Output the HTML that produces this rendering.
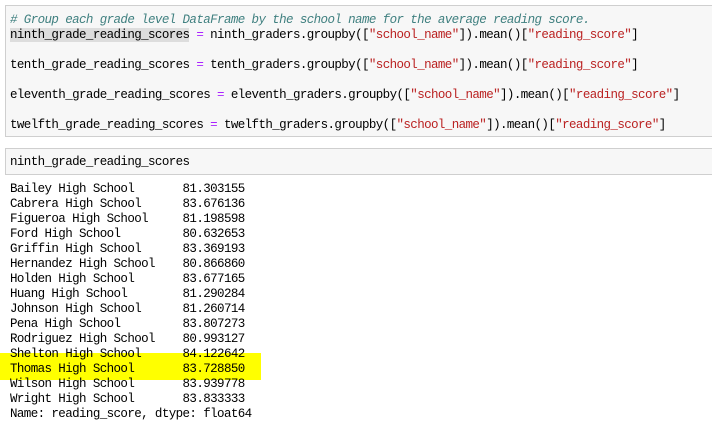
<html><head><style>
body{margin:0;width:712px;height:427px;background:#fff;position:relative;overflow:hidden;font-family:"Liberation Mono",monospace;font-size:12.5px;letter-spacing:-0.6px;color:#000}
.box{position:absolute;left:5px;right:-2px;background:#f7f7f7;border:1px solid #cfcfcf}
.l{position:absolute;left:10px;white-space:pre;line-height:15px}
.c{color:#408080;font-style:italic}.s{color:#BA2121}.o{color:#AA22FF}
.hl{background:#ddd}
</style></head><body>
<div class="box" style="top:5px;height:130px"></div>
<div class="box" style="top:148px;height:25px"></div>
<div style="position:absolute;left:0;top:353px;width:261px;height:27px;background:#ffff00"></div>
<div class="l c" style="top:13px"># Group each grade level DataFrame by the school name for the average reading score.</div>
<div class="l" style="top:28px"><span class="hl">ninth_grade_reading_scores</span> <span class="o">=</span> ninth_graders.groupby([<span class="s">"school_name"</span>]).mean()[<span class="s">"reading_score"</span>]</div>
<div class="l" style="top:58px">tenth_grade_reading_scores <span class="o">=</span> tenth_graders.groupby([<span class="s">"school_name"</span>]).mean()[<span class="s">"reading_score"</span>]</div>
<div class="l" style="top:88px">eleventh_grade_reading_scores <span class="o">=</span> eleventh_graders.groupby([<span class="s">"school_name"</span>]).mean()[<span class="s">"reading_score"</span>]</div>
<div class="l" style="top:118px">twelfth_grade_reading_scores <span class="o">=</span> twelfth_graders.groupby([<span class="s">"school_name"</span>]).mean()[<span class="s">"reading_score"</span>]</div>
<div class="l" style="top:155px">ninth_grade_reading_scores</div>
<div class="l" style="top:182px">Bailey High School       81.303155
Cabrera High School      83.676136
Figueroa High School     81.198598
Ford High School         80.632653
Griffin High School      83.369193
Hernandez High School    80.866860
Holden High School       83.677165
Huang High School        81.290284
Johnson High School      81.260714
Pena High School         83.807273
Rodriguez High School    80.993127
Shelton High School      84.122642
Thomas High School       83.728850
Wilson High School       83.939778
Wright High School       83.833333
Name: reading_score, dtype: float64</div>
</body></html>
